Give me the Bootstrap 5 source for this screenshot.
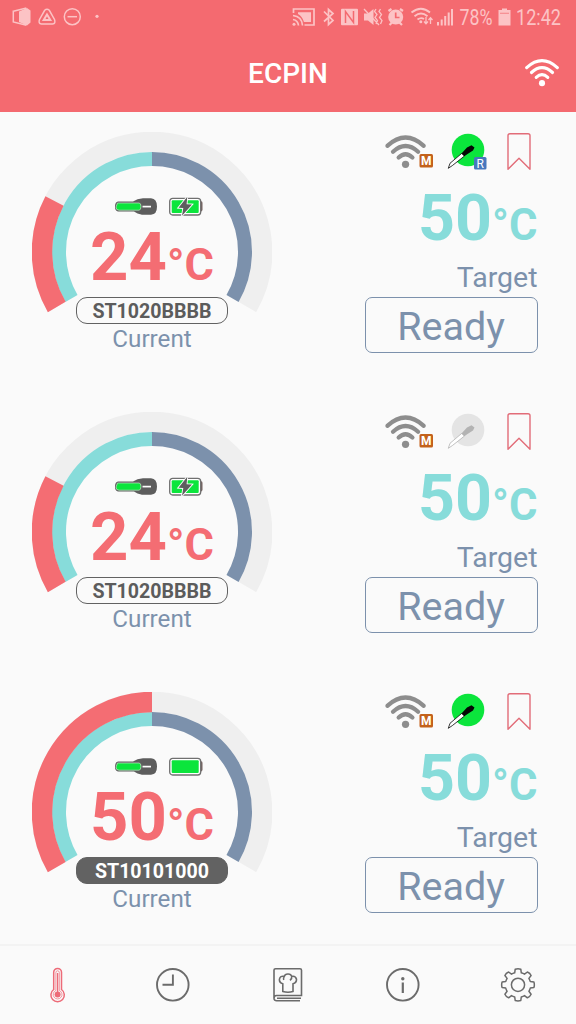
<!DOCTYPE html>
<html lang="en">
<head>
<meta charset="utf-8">
<meta name="viewport" content="width=device-width, initial-scale=1">
<title>ECPIN</title>
<link rel="stylesheet" href="https://cdn.jsdelivr.net/npm/bootstrap@5.3.0/dist/css/bootstrap.min.css">
<style>
body{font-family:Roboto,"Liberation Sans",sans-serif;background:#fafafa;height:1024px;overflow:hidden}
svg{display:block;flex:none}
main{min-height:0;overflow:hidden}
.topbar{background:#f46a70;height:112px;flex:none}
.statusline{height:36px;color:#fcc3c5}
.apptitle{font-size:28px;font-weight:500;line-height:76px;height:76px}
.device{height:280px;padding:20px 38.5px 0 32px}
.gauge{display:grid;width:240px;height:230px}
.gauge>*{grid-area:1/1}
.readout{padding-top:64px}
.temp{font-size:67px;line-height:66px;height:66px;font-weight:700;color:#f46d73;white-space:nowrap}
.temp span{font-size:45px;line-height:0}
.goal{color:#87dcda;font-size:64.5px}
.goal span{font-size:43.5px}
.serial{width:152px;height:27px;border:1.7px solid #626262;border-radius:11px;color:#5c5c5c;font-size:19.6px;line-height:27px;font-weight:700;margin-top:7px}
.serial.filled{background:#626262;color:#fff}
.slate{color:#7c91ac}
.now{font-size:24.200px;line-height:30px}
.aim{font-size:28.5px;line-height:32px;margin-top:11px}
.side{width:173px}
.readybox{width:173px;height:56px;border:1.7px solid #7c91ac;border-radius:7px;font-size:39.5px;line-height:60px;margin-top:3px;background:none}
.readybox span{margin-top:3px}
.tabs{height:80px;border-top:2px solid #f3f3f3;color:#6b6b6b}
</style>
</head>
<body class="d-flex flex-column">
<svg width="0" height="0" class="position-absolute" aria-hidden="true">
<defs>
<symbol id="waves" viewBox="0 0 40 34"><g fill="none" stroke="currentColor" stroke-linecap="round"><path d="M2 11.2Q20-5.2 38 11.2"/><path d="M7.6 17Q20 5.6 32.4 17"/><path d="M13.2 22.8Q20 16.4 26.8 22.8"/></g><circle cx="20" cy="29.5" r="3.6" fill="currentColor"/></symbol>
<symbol id="net" viewBox="0 0 50 40"><use href="#waves" x="1.300" y="2.500" width="40.500" height="34.400" color="#8d8d8d" stroke-width="4.200"/><rect x="35.500" y="22" width="13.500" height="13.500" rx="1.500" fill="#c3611b"/><text x="42.200" y="33.200" text-anchor="middle" font-size="12" font-weight="700" fill="#fff">M</text></symbol>
<symbol id="needle" viewBox="0 0 40 40"><path d="M1.300 36.300 3 31.300 14.800 21.300 17.500 24 5.300 33.600Z" fill="#fff" stroke="currentColor" stroke-width=".8"/><path d="M14.500 21.500 20 15.500 24.500 13.300 27.500 15.400 26 18.500 20.500 22 17.300 24.300Z" fill="currentColor"/></symbol>
<symbol id="mark-on" viewBox="0 0 40 40"><circle cx="21" cy="18" r="16.300" fill="#0be53c"/><use href="#needle" width="40" height="40" color="#050505"/></symbol>
<symbol id="mark-off" viewBox="0 0 40 40"><circle cx="21" cy="18" r="16.300" fill="#e4e4e4"/><use href="#needle" width="40" height="40" color="#b3b3b3"/></symbol>
<symbol id="ribbon" viewBox="0 0 26 40"><path d="M2 37.200V3.500Q2 1.700 4 1.700H22Q24 1.700 24 3.500V37.200L13 26.300Z" fill="none" stroke="#e26c78" stroke-width="1.400" stroke-linejoin="round"/></symbol>
<symbol id="probe" viewBox="0 0 42 20"><path d="M3 5.500H18Q22 2.800 28 2.200H36Q42 2.500 42 10.500T36 18.700H27Q22 18 19 15.600H3Q0 15 0 10.500T3 5.500Z" fill="#5d5d5d"/><path d="M2.500 7H24Q26 7 26 10.500T24 14.200H4Q1 14.200 1 11Z" fill="#0be53c" stroke="#c8dbc8" stroke-width=".7"/><path d="M27.500 10.600H36" stroke="#fff" stroke-width="1.700"/></symbol>
<symbol id="cell" viewBox="0 0 34 20"><path d="M31 5.200H32.200Q33.500 5.500 33.500 7V13.500Q33.500 15 32.200 15.500H31Z" fill="#74615f"/><rect x=".7" y="2.400" width="31" height="16.600" rx="3" fill="#fff" stroke="#707070" stroke-width="1.300"/><rect x="2.700" y="4.300" width="27" height="12.800" rx="1" fill="#0be53c"/></symbol>
<symbol id="cell-charge" viewBox="0 0 34 20"><use href="#cell" width="34" height="20"/><path d="M18.300.8 9.500 11.700 14.300 12.100 13 19.700 23 8.600 17.600 8.200Z" fill="#5e5e5e" stroke="#fff" stroke-width="1.800" paint-order="stroke"/></symbol>
<symbol id="dial" viewBox="0 0 240 230"><path d="M24.740 175A110 110 0 1 1 215.260 175" fill="none" stroke="#efefef" stroke-width="20.500"/><path d="M39.460 166.500A93 93 0 0 1 120 27" fill="none" stroke="#87dcda" stroke-width="14"/><path d="M120 27A93 93 0 0 1 200.540 166.500" fill="none" stroke="#7c91ac" stroke-width="14"/></symbol>
</defs>
</svg>

<header class="topbar text-white">
<div class="statusline d-flex justify-content-between">
<svg width="110" height="36" fill="none" stroke="currentColor" stroke-width="1.500"><path d="M13.300 11.200 25.500 8.300V25L13.300 22Z"/><path d="M19 11.500 27 8 30.500 10.500V22.500L27 25.500 19 22Z" fill="currentColor" stroke="none"/><path d="M44.700 10.300Q47 8 49.300 10.300L54.500 19.500Q56 23.500 52.500 24.100H41.500Q38 23.500 39.500 19.500Z"/><path d="M47 14.500 50.300 20H43.700Z" stroke-width="2"/><circle cx="72.300" cy="16.700" r="8"/><path d="M67.500 16.700H77"/><circle cx="97" cy="16.300" r="1.600" fill="currentColor" stroke="none"/></svg>
<svg width="296" height="36" fill="none" stroke="currentColor" stroke-width="1.700">
<path d="M13.500 13V9H34V25H24.500"/><path d="M18 12.200H31V22H24Q22 16 18 14Z" fill="currentColor" stroke="none"/><path d="M13 15.500Q22 16.500 22.500 25.500M13 19.500Q18 20.300 18.500 25.500"/><circle cx="14" cy="24.300" r="1.500" fill="currentColor" stroke="none"/>
<path d="M44 11.500 53 20.500 48.500 24.500V9.500L53 13.500 44 21.500"/>
<rect x="61" y="8.700" width="17" height="16.600" rx="1" fill="currentColor" stroke="none"/><path d="M65.500 23V11.500L73.500 22.500V11" stroke="#f46a70" stroke-width="1.500"/>
<path d="M84 13.500H88L93.500 9V25L88 20.500H84Z" fill="currentColor" stroke="none"/><path d="M84 9 99 25M96 9 94.500 11.500 97 14.500 95 17.500 97.500 20.500 96 24M100.500 9 99 11.500 101.500 14.500 99.500 17.500 102 20.500 100.500 24" stroke-width="1.300"/>
<circle cx="115.700" cy="17" r="7.500" fill="currentColor" stroke="none"/><path d="M108.500 11 111.500 9M123 11 120 9M109.500 25 112 22.500M122 25 119.500 22.500" stroke-width="2.200"/><path d="M115.700 12.500V17.500H119.500" stroke="#f46a70"/>
<path d="M131.500 12.500Q141 5 150 12.500M134.500 16.200Q141 11 147.500 16.200M137.500 19.500Q141 17 144 19" stroke-width="1.900"/><circle cx="140.800" cy="21.700" r="1.500" fill="currentColor" stroke="none"/><path d="M146 17V23.500M144 21.500 146 23.800 148 21.500M150.500 24V18M148.500 20 150.500 17.700 152.500 20" stroke-width="1.300"/>
<path d="M158 22V25.500M161.700 19.500V25.500M165.200 16V25.500M168.700 12.500V25.500M172 9V25.500" stroke-width="2"/>
<g fill="currentColor" stroke="none"><text x="179.500" y="25" font-size="21.500" textLength="33" lengthAdjust="spacingAndGlyphs">78%</text><path d="M222 8.500H227V10H230.500V25.500H218.500V10H222Z"/><text x="236" y="25" font-size="21.500" textLength="45" lengthAdjust="spacingAndGlyphs">12:42</text></g><path d="M220 13.300H229" stroke="#f58c90" stroke-width="1.200"/>
</svg>
</div>
<div class="position-relative text-center"><div class="apptitle">ECPIN</div><svg class="position-absolute end-0 top-0" style="margin:22px 17px 0 0" width="34" height="30"><use href="#waves" width="34" height="29" stroke-width="3.700"/></svg></div>
</header>

<main class="flex-grow-1">
<section class="device d-flex justify-content-between">
<div class="gauge"><svg width="240" height="230"><use href="#dial"/><path d="M24.740 175A110 110 0 0 1 22.500 69" fill="none" stroke="#f46d73" stroke-width="20.500"/></svg>
<div class="readout d-flex flex-column align-items-center"><div class="d-flex ms-3" style="gap:12px;padding-right:2px"><svg width="42" height="20"><use href="#probe"/></svg><svg width="34" height="20"><use href="#cell-charge"/></svg></div><div class="temp mt-2">24<span>°C</span></div><div class="serial text-center">ST1020BBBB</div><div class="now slate">Current</div></div></div>
<div class="side d-flex flex-column align-items-end"><div class="d-flex" style="padding-right:5.5px"><svg width="50" height="40"><use href="#net"/></svg><svg width="40" height="40" style="margin:0 19px 0 13px"><use href="#mark-on"/><rect x="27" y="25" width="12.500" height="12.500" rx="1.500" fill="#4777bd"/><text x="33.200" y="35.500" text-anchor="middle" font-size="12" fill="#fff">R</text></svg><svg width="26" height="40"><use href="#ribbon"/></svg></div><div class="temp goal" style="margin-top:13px">50<span>°C</span></div><div class="aim slate">Target</div><div class="readybox slate d-flex align-items-center justify-content-center"><span>Ready</span></div></div>
</section>

<section class="device d-flex justify-content-between">
<div class="gauge"><svg width="240" height="230"><use href="#dial"/><path d="M24.740 175A110 110 0 0 1 22.500 69" fill="none" stroke="#f46d73" stroke-width="20.500"/></svg>
<div class="readout d-flex flex-column align-items-center"><div class="d-flex ms-3" style="gap:12px;padding-right:2px"><svg width="42" height="20"><use href="#probe"/></svg><svg width="34" height="20"><use href="#cell-charge"/></svg></div><div class="temp mt-2">24<span>°C</span></div><div class="serial text-center">ST1020BBBB</div><div class="now slate">Current</div></div></div>
<div class="side d-flex flex-column align-items-end"><div class="d-flex" style="padding-right:5.5px"><svg width="50" height="40"><use href="#net"/></svg><svg width="40" height="40" style="margin:0 19px 0 13px"><use href="#mark-off"/></svg><svg width="26" height="40"><use href="#ribbon"/></svg></div><div class="temp goal" style="margin-top:13px">50<span>°C</span></div><div class="aim slate">Target</div><div class="readybox slate d-flex align-items-center justify-content-center"><span>Ready</span></div></div>
</section>

<section class="device d-flex justify-content-between">
<div class="gauge"><svg width="240" height="230"><use href="#dial"/><path d="M24.740 175A110 110 0 0 1 120 10" fill="none" stroke="#f46d73" stroke-width="20.500"/></svg>
<div class="readout d-flex flex-column align-items-center"><div class="d-flex ms-3" style="gap:12px;padding-right:2px"><svg width="42" height="20"><use href="#probe"/></svg><svg width="34" height="20"><use href="#cell"/></svg></div><div class="temp mt-2">50<span>°C</span></div><div class="serial filled text-center">ST10101000</div><div class="now slate">Current</div></div></div>
<div class="side d-flex flex-column align-items-end"><div class="d-flex" style="padding-right:5.5px"><svg width="50" height="40"><use href="#net"/></svg><svg width="40" height="40" style="margin:0 19px 0 13px"><use href="#mark-on"/></svg><svg width="26" height="40"><use href="#ribbon"/></svg></div><div class="temp goal" style="margin-top:13px">50<span>°C</span></div><div class="aim slate">Target</div><div class="readybox slate d-flex align-items-center justify-content-center"><span>Ready</span></div></div>
</section>
</main>

<nav class="tabs row g-0 flex-shrink-0 align-items-center">
<div class="col d-flex justify-content-center"><svg width="36" height="36" fill="none" stroke="#ed6b78" stroke-width="1.500"><path d="M13.700 22.500V5.300A3.900 3.900 0 0 1 21.500 5.300V22.500A6.700 6.700 0 1 1 13.700 22.500Z"/><path d="M15.900 23.500V5.500A1.700 1.700 0 0 1 19.300 5.500V23.500A4.400 4.400 0 1 1 15.900 23.500Z" stroke-width=".7"/><path d="M17.600 6V27" stroke-width="1.300"/><circle cx="17.600" cy="27.600" r="3" fill="#ed6b78" stroke="none"/></svg></div>
<div class="col d-flex justify-content-center"><svg width="36" height="36" fill="none" stroke="currentColor" stroke-width="1.900"><circle cx="17.800" cy="17.800" r="15.800"/><path d="M17.900 7.500V17.800H7.500"/></svg></div>
<div class="col d-flex justify-content-center"><svg width="36" height="36" fill="none" stroke="currentColor" stroke-width="1.600"><path d="M4 31V3Q4 1.800 5.500 1.800H30Q31.500 1.800 31.500 3.300V28.500H6.500Q4 28.500 4 31.200T7 33.700H30M7 31.200H31"/><path d="M12.800 24.500V16.800Q9.200 15.800 9.400 12.300 10.200 8.500 14.200 9.400 15 6.900 18 7 21 6.900 21.700 9.400 25.500 8.500 26.500 12.300 26.600 15.800 23 16.800V24.500Q18 26 12.800 24.500ZM14.200 9.400Q13.100 11.500 13.700 13M21.700 9.400Q22.200 11.500 20 13.400"/></svg></div>
<div class="col d-flex justify-content-center"><svg width="36" height="36" fill="none" stroke="currentColor" stroke-width="1.900"><circle cx="17.800" cy="17.800" r="15.800"/><circle cx="17.800" cy="11.700" r="1.700" fill="currentColor" stroke="none"/><path d="M17.800 15.500V26" stroke-width="2.200"/></svg></div>
<div class="col d-flex justify-content-center"><svg width="36" height="36" fill="none" stroke="currentColor" stroke-width="1.500" stroke-linejoin="round"><circle cx="18" cy="17.800" r="6.600"/><path d="M15.200 2.200Q18 1.200 20.800 2.200L21.300 5.800Q23.200 6.400 24.500 7.200L27.400 5Q30 6 31.100 8.500L28.900 11.400Q29.800 12.900 30.300 14.600L33.900 15.100Q34.800 17.900 33.900 20.600L30.300 21.100Q29.800 22.800 28.900 24.300L31.100 27.200Q30 29.700 27.400 30.800L24.500 28.600Q23.200 29.400 21.300 29.900L20.800 33.500Q18 34.400 15.200 33.500L14.700 29.900Q12.800 29.400 11.500 28.600L8.600 30.800Q6 29.700 4.900 27.200L7.100 24.300Q6.200 22.800 5.700 21.100L2.100 20.600Q1.200 17.900 2.100 15.100L5.700 14.600Q6.200 12.900 7.100 11.400L4.900 8.500Q6 6 8.600 5L11.500 7.200Q12.800 6.400 14.700 5.800Z"/></svg></div>
</nav>
<script src="https://cdn.jsdelivr.net/npm/bootstrap@5.3.0/dist/js/bootstrap.bundle.min.js"></script>
</body>
</html>
